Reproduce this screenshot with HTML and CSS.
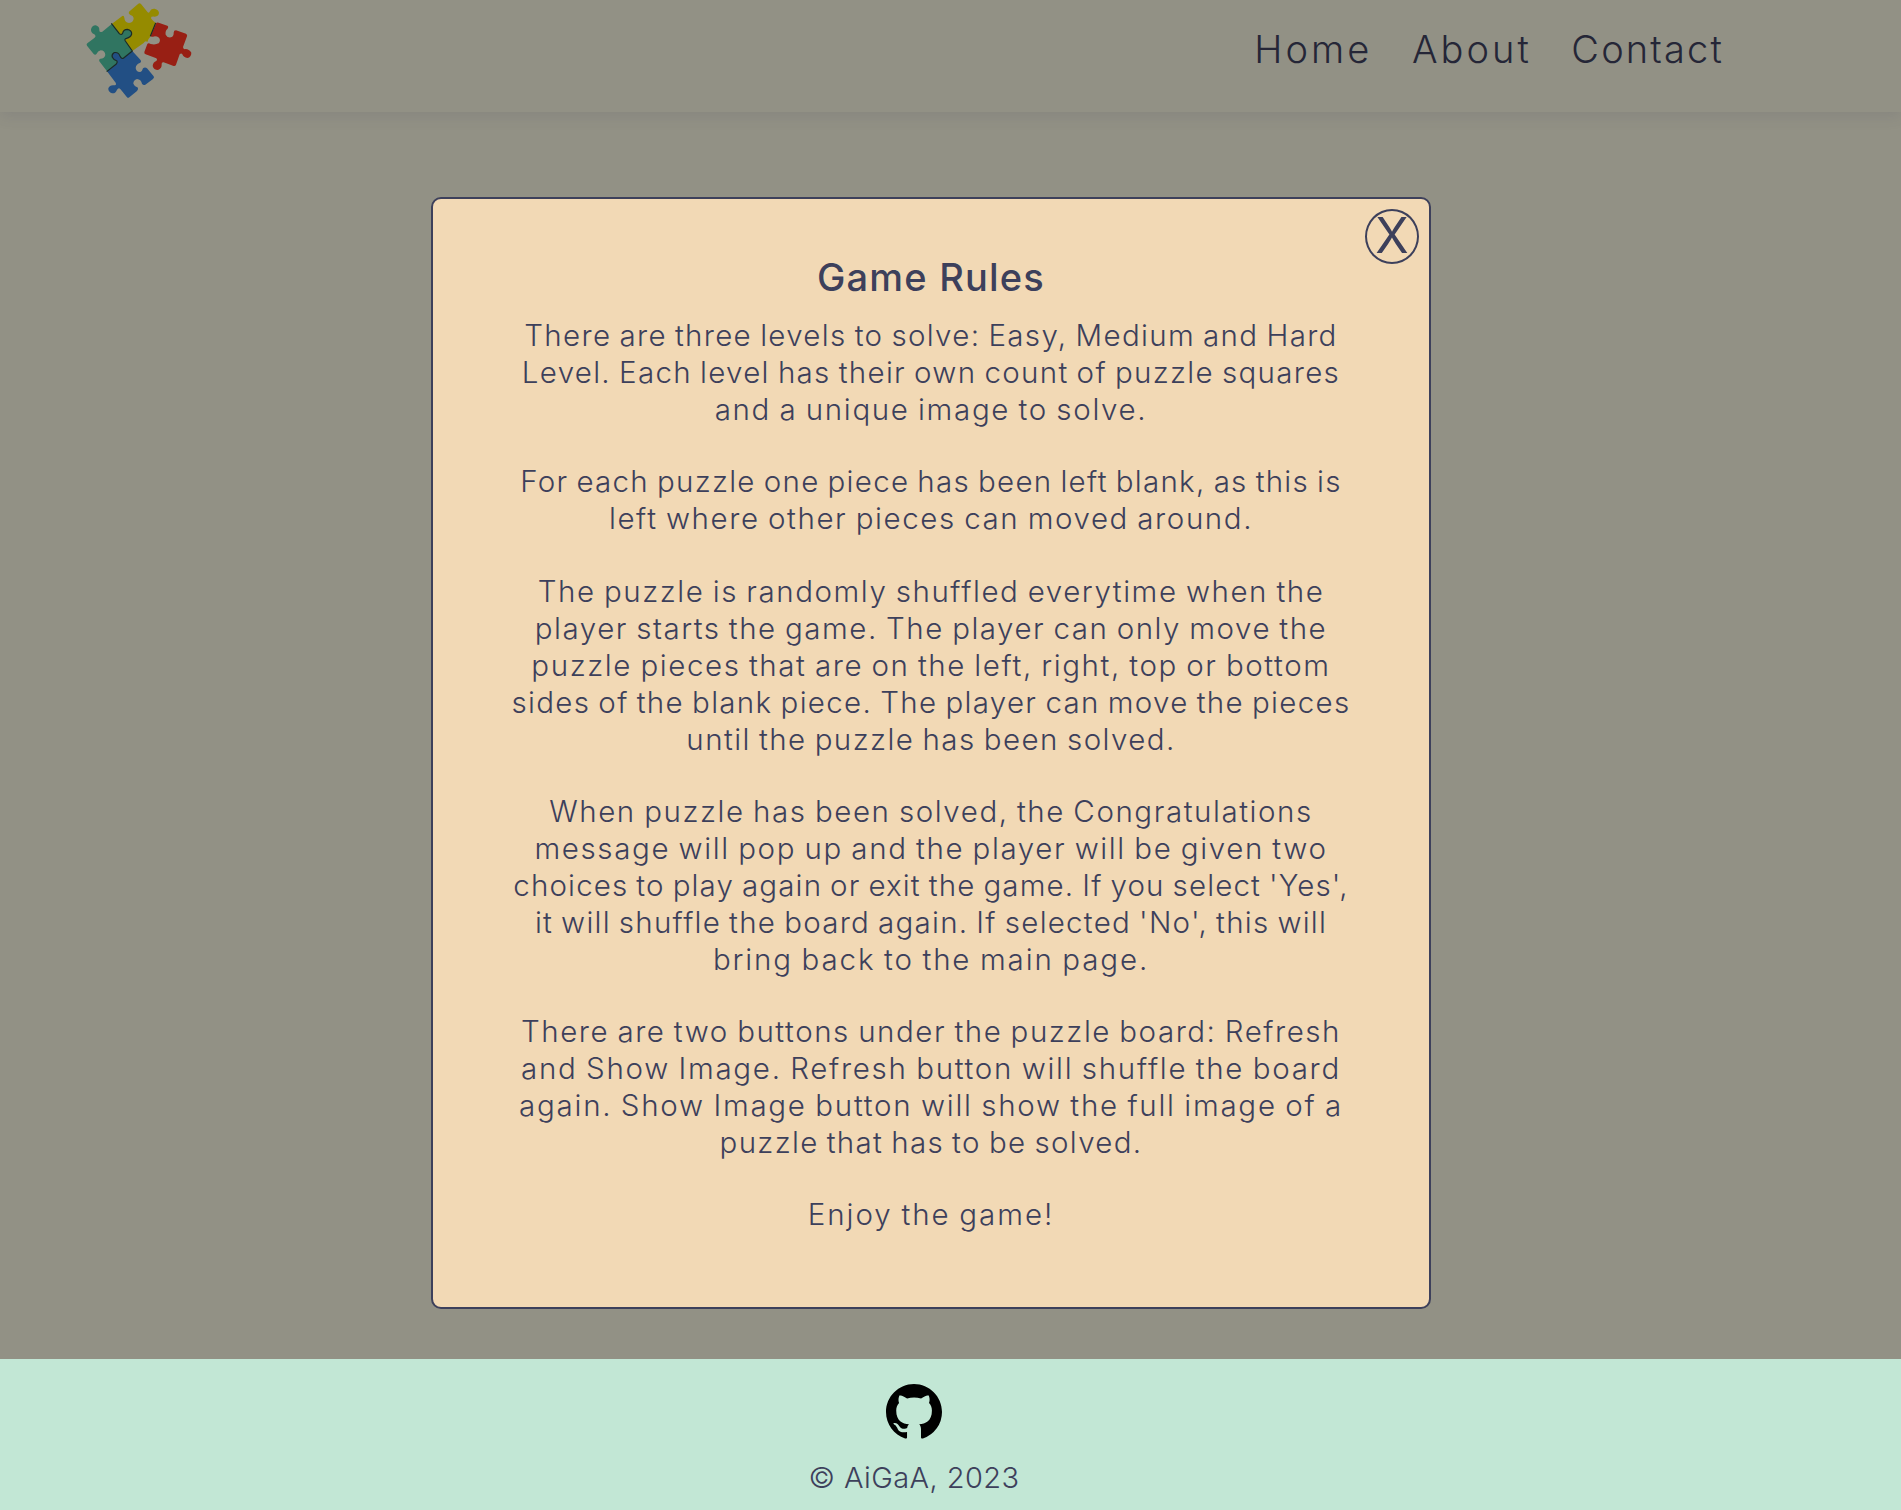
FILE: index.html
```html
<!DOCTYPE html>
<html lang="en">
<head>
<meta charset="utf-8">
<title>Puzzle Game</title>
<link rel="stylesheet" href="styles.css">
</head>
<body>
<header class="header">
  <a class="logo" aria-label="Puzzle">
    <svg width="140" height="112" viewBox="0 0 420 336">
      <path fill="#958b00" d="M126 71L157 48Q162 46 163 53Q164 67 177 69Q191 67 191 54Q190 47 180 44Q174 40 177 35L205 11Q209 8 213 12L233 37Q238 40 240 33Q244 25 254 26Q266 29 267 38Q267 48 254 50Q242 49 243 54Q244 59 258 69L241 110Q233 118 232 126Q226 121 221 129L187 153L164 121Q164 117 178 113Q186 109 184 97Q176 86 165 90Q158 95 157 103L150 103Z"/>
      <path fill="#307561" d="M126 71L150 103Q156 106 158 99Q161 88 172 88Q186 91 185 102Q182 112 170 115Q162 117 166 123L187 153L161 174Q155 179 150 168Q145 155 132 158Q124 163 127 172Q130 179 141 183Q143 187 139 192L111 214L88 184Q85 178 91 176Q104 176 106 165Q105 151 92 151Q83 153 80 161Q76 167 71 162L51 137Q48 133 52 130L73 114Q80 109 73 103Q62 99 63 88Q66 76 77 76Q89 80 88 90Q87 99 97 95Z"/>
      <path fill="#224f84" d="M187 153L211 179Q216 185 209 189Q198 193 197 204Q199 217 211 216Q217 214 219 205Q225 200 231 205L251 229Q254 233 249 237L226 254Q220 257 216 251Q213 238 201 237Q190 240 190 251Q194 261 204 263Q205 268 201 273L178 292Q174 295 171 292L151 267Q146 261 141 269Q137 281 126 280Q114 276 115 265Q119 255 131 256Q141 256 137 248L111 214L139 192Q143 187 141 183Q129 178 127 172Q124 163 132 158Q145 155 150 168Q155 179 161 174Z"/>
      <path fill="#981f14" d="M258 71Q259 66 266 68L292 77Q297 80 292 87Q285 93 287 104Q292 114 303 112Q312 108 311 98Q311 91 318 91L348 101Q353 104 351 109L339 141Q339 149 347 147Q357 147 364 158Q364 171 352 174Q341 173 337 163Q334 158 329 163L318 194Q316 199 311 198L281 187Q274 186 275 193Q276 206 264 210Q251 210 248 198Q249 186 259 183Q264 177 257 174L227 163Q222 161 223 156L232 132Q235 128 242 132Q256 135 266 130Q273 121 267 113Q258 107 249 110Q241 112 243 106Z"/>
      <g class="logo-seams">
        <path d="M124 70L148 101Q155 107 158 99Q161 88 172 88Q186 91 185 102Q182 112 170 115Q162 117 166 123L187 153L161 174Q155 179 150 168Q145 155 132 158Q124 163 127 172Q130 179 141 183Q143 187 139 192L110 215"/>
        <path d="M257 69L241 109"/>
      </g>
    </svg>
  </a>
  <nav class="nav">
    <a style="letter-spacing:3.05px">Home</a>
    <a style="letter-spacing:3.05px">About</a>
    <a style="letter-spacing:2.15px">Contact</a>
  </nav>
</header>
<main class="page">
  <section class="modal">
    <button class="close">X</button>
    <h2 class="title">Game Rules</h2>
    <p class="rule">
      <span style="letter-spacing:1.322px">There are three levels to solve: Easy, Medium and Hard</span>
      <span style="letter-spacing:1.305px">Level. Each level has their own count of puzzle squares</span>
      <span style="letter-spacing:1.661px">and a unique image to solve.</span>
    </p>
    <p class="rule">
      <span style="letter-spacing:1.267px">For each puzzle one piece has been left blank, as this is</span>
      <span style="letter-spacing:1.588px">left where other pieces can moved around.</span>
    </p>
    <p class="rule">
      <span style="letter-spacing:1.559px">The puzzle is randomly shuffled everytime when the</span>
      <span style="letter-spacing:1.52px">player starts the game. The player can only move the</span>
      <span style="letter-spacing:1.593px">puzzle pieces that are on the left, right, top or bottom</span>
      <span style="letter-spacing:1.314px">sides of the blank piece. The player can move the pieces</span>
      <span style="letter-spacing:1.418px">until the puzzle has been solved.</span>
    </p>
    <p class="rule">
      <span style="letter-spacing:1.57px">When puzzle has been solved, the Congratulations</span>
      <span style="letter-spacing:1.627px">message will pop up and the player will be given two</span>
      <span style="letter-spacing:1.15px">choices to play again or exit the game. If you select 'Yes',</span>
      <span style="letter-spacing:1.25px">it will shuffle the board again. If selected 'No', this will</span>
      <span style="letter-spacing:1.865px">bring back to the main page.</span>
    </p>
    <p class="rule">
      <span style="letter-spacing:1.54px">There are two buttons under the puzzle board: Refresh</span>
      <span style="letter-spacing:1.72px">and Show Image. Refresh button will shuffle the board</span>
      <span style="letter-spacing:1.75px">again. Show Image button will show the full image of a</span>
      <span style="letter-spacing:1.315px">puzzle that has to be solved.</span>
    </p>
    <p class="rule">
      <span style="letter-spacing:1.96px">Enjoy the game!</span>
    </p>
  </section>
</main>
<footer class="footer">
  <svg class="github" width="56" height="56" viewBox="0 0 16 16"><path d="M8 0C3.58 0 0 3.58 0 8c0 3.54 2.29 6.53 5.47 7.59.4.07.55-.17.55-.38 0-.19-.01-.82-.01-1.49-2.01.37-2.53-.49-2.69-.94-.09-.23-.48-.94-.82-1.13-.28-.15-.68-.52-.01-.53.63-.01 1.08.58 1.23.82.72 1.21 1.87.87 2.33.66.07-.52.28-.87.51-1.07-1.78-.2-3.64-.89-3.64-3.95 0-.87.31-1.59.82-2.15-.08-.2-.36-1.02.08-2.12 0 0 .67-.21 2.2.82.64-.18 1.32-.27 2-.27s1.36.09 2 .27c1.53-1.04 2.2-.82 2.2-.82.44 1.1.16 1.92.08 2.12.51.56.82 1.27.82 2.15 0 3.07-1.87 3.75-3.65 3.95.29.25.54.73.54 1.48 0 1.07-.01 1.93-.01 2.2 0 .21.15.46.55.38A8.01 8.01 0 0 0 16 8c0-4.42-3.58-8-8-8z"/></svg>
  <p class="copyright">© AiGaA, 2023</p>
</footer>
</body>
</html>
```
FILE: styles.css
```css
* { box-sizing: border-box; }

body {
  margin: 0;
  min-height: 1510px;
  display: flex;
  flex-direction: column;
  background: #929185;
  color: #3d405b;
  font: 300 29px/37px Inter, sans-serif;
}

p, h2 { margin: 0; }

.header {
  height: 112px;
  display: flex;
  justify-content: space-between;
  padding: 0 177px 0 70px;
  box-shadow: 0 4px 14px rgba(61, 64, 91, .14);
}

.logo, .logo svg { display: block; }

.logo-seams {
  fill: none;
  stroke: #1b2a26;
  stroke-width: 3.5;
  stroke-linejoin: round;
}

.nav {
  display: flex;
  gap: 39.5px;
  padding-top: 26px;
  color: #252637;
  font-size: 38px;
  line-height: 46px;
}

.page {
  flex: 1;
  display: flex;
  justify-content: center;
  padding: 85px 39px 50px 0;
}

.modal {
  position: relative;
  width: 1000px;
  height: 1112px;
  padding-top: 55px;
  border: 2px solid #3d405b;
  border-radius: 10px;
  background: #f2d9b5;
  text-align: center;
}

.close {
  position: absolute;
  top: 10px;
  right: 10px;
  width: 54px;
  height: 55px;
  padding: 0 0 3px;
  border: 2px solid #3d405b;
  border-radius: 50%;
  background: none;
  color: #3d405b;
  font: 400 49px/50px Inter, sans-serif;
}

.title {
  margin-bottom: 17px;
  font-size: 38px;
  font-weight: 500;
  line-height: 46px;
  letter-spacing: 1.2px;
}

.rule { margin-bottom: 35.3px; }

.rule span {
  display: block;
  font-size: 29.5px;
  word-spacing: -1.5px;
  white-space: nowrap;
}

.footer {
  height: 151px;
  display: flex;
  flex-direction: column;
  align-items: center;
  gap: 19.5px;
  padding: 24.5px 73px 0 0;
  background: #c2e7d5;
}

.github { fill: #000; }

.copyright { letter-spacing: .43px; }
```
